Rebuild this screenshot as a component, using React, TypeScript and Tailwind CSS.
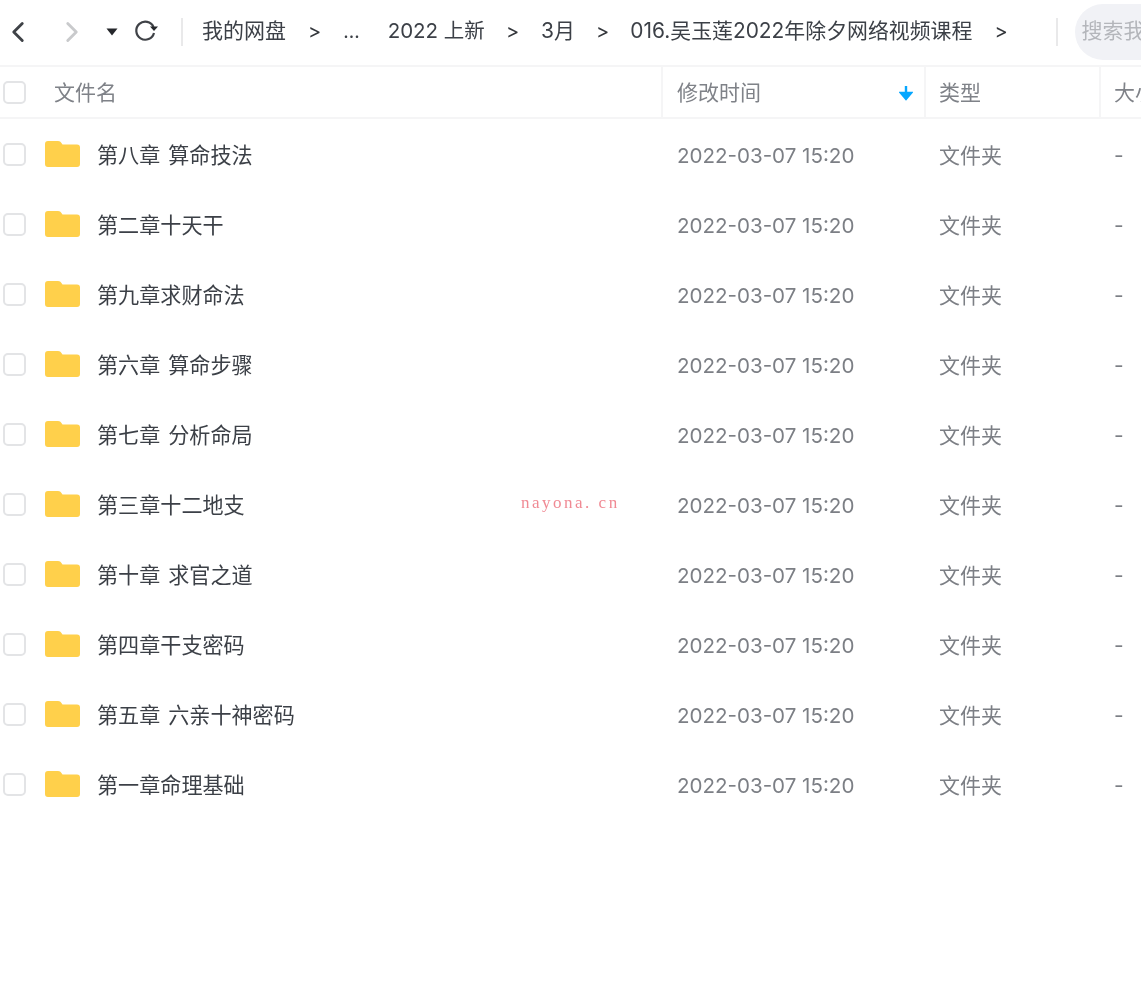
import { ChevronLeft, ChevronRight } from "lucide-react";

const folders = [
  "第八章 算命技法",
  "第二章十天干",
  "第九章求财命法",
  "第六章 算命步骤",
  "第七章 分析命局",
  "第三章十二地支",
  "第十章 求官之道",
  "第四章干支密码",
  "第五章 六亲十神密码",
  "第一章命理基础",
];

function Check() {
  return <div className="w-[23px] h-[23px] rounded-[5px] border-2 border-[#e3e4e6] bg-white shrink-0" />;
}

function Folder() {
  return (
    <svg width="35" height="26" viewBox="0 0 35 26" className="shrink-0">
      <path d="M0 3a3 3 0 0 1 3-3h10c2 0 3 1 4.500 3.500H32a3 3 0 0 1 3 3V23a3 3 0 0 1-3 3H3a3 3 0 0 1-3-3z" fill="#ffd04b" />
    </svg>
  );
}

function Sep() {
  return <span className="text-[#33363b] text-[20px]">&gt;</span>;
}

export default function App() {
  return (
    <div className="relative w-[1141px] h-[1004px] overflow-hidden bg-white blur-[0.4px] font-['Inter','Noto_Sans_CJK_SC',sans-serif]">
      {/* toolbar */}
      <div className="h-[67px] pb-[2px] flex items-center border-b-2 border-[#f5f5f6] text-[21px] text-[#3c4047] whitespace-nowrap">
        <ChevronLeft size={34} strokeWidth={2} className="ml-[1px] text-[#3f4247] shrink-0" />
        <ChevronRight size={34} strokeWidth={2} className="ml-[20px] text-[#c9cacc] shrink-0" />
        <svg width="12" height="8" viewBox="0 0 12 8" className="ml-[17px] shrink-0">
          <path d="M0.500 0.500h11L6 7.500z" fill="#25272b" />
        </svg>
        <svg width="26" height="26" viewBox="0 0 26 26" fill="none" className="ml-[15px] mb-[3px] shrink-0">
          <path d="M20.500 10A9 9 0 1 0 21 16" stroke="#3f4247" strokeWidth="2.200" />
          <path d="M17 9.500h8l-4 4.500z" fill="#25272b" />
        </svg>
        <div className="w-[2px] h-[28px] bg-[#e9e9ea] ml-[22px] mr-[19px] shrink-0" />
        <div className="flex items-center pb-[1px]">
          <span>我的网盘</span>
          <span className="ml-[22px]"><Sep /></span>
          <span className="ml-[22px] text-[19px] pt-[2px]">...</span>
          <span className="ml-[28px] text-[20.500px]">2022 上新</span>
          <span className="ml-[21px]"><Sep /></span>
          <span className="ml-[22px]">3月</span>
          <span className="ml-[21px]"><Sep /></span>
          <span className="ml-[21px] text-[20.900px]">016.吴玉莲2022年除夕网络视频课程</span>
          <span className="ml-[22px]"><Sep /></span>
        </div>
        <div className="w-[2px] h-[28px] bg-[#e9e9ea] ml-[48px] mr-[17px] shrink-0" />
        <div className="h-[56px] w-[120px] shrink-0 rounded-l-[28px] bg-[#f1f2f6] pl-[7px] pb-[2px] flex items-center text-[#b4b6bb] overflow-hidden">
          搜索我的文件
        </div>
      </div>

      {/* table header */}
      <div className="h-[52px] flex border-b-2 border-[#f5f5f6] text-[21px] text-[#7f8288] whitespace-nowrap">
        <div className="w-[661px] shrink-0 flex items-center pl-[3px]">
          <Check />
          <span className="ml-[28px] pt-[2px]">文件名</span>
        </div>
        <div className="w-[263px] shrink-0 flex items-center justify-between border-l-2 border-[#f5f5f6] pl-[14px] pr-[11px]">
          <span className="pt-[2px]">修改时间</span>
          <svg width="14" height="16" viewBox="0 0 14 16" className="mt-[2px]">
            <path d="M7 1v12M2 8l5 6 5-6z" stroke="#06a7ff" strokeWidth="2.400" fill="#06a7ff" />
          </svg>
        </div>
        <div className="w-[175px] shrink-0 flex items-center border-l-2 border-[#f5f5f6] pl-[13px] pt-[2px]">类型</div>
        <div className="flex-1 flex items-center border-l-2 border-[#f5f5f6] pl-[13px] pt-[2px]">大小</div>
      </div>

      {/* rows */}
      <div className="flex flex-col whitespace-nowrap pt-[1px]">
        {folders.map((name) => (
          <div key={name} className="h-[70px] flex items-center text-[21px] text-[#7c7f85]">
            <div className="w-[662px] shrink-0 flex items-center pl-[3px]">
              <Check />
              <div className="ml-[19px] mb-[2px]">
                <Folder />
              </div>
              <span className="ml-[17px] pt-[2px] text-[21.100px] [word-spacing:2px] text-[#3c4047]">{name}</span>
            </div>
            <div className="w-[263px] shrink-0 pl-[15px] pt-[2px] text-[20.550px]">2022-03-07 15:20</div>
            <div className="w-[175px] shrink-0 pl-[14px] pt-[2px]">文件夹</div>
            <div className="pl-[14px] pt-[2px]">-</div>
          </div>
        ))}
      </div>

      {/* watermark */}
      <div className="absolute left-[521px] top-[492px] font-['Liberation_Serif',serif] text-[17px] leading-[22px] tracking-[2.500px] text-[#f08a94]">
        nayona. cn
      </div>
    </div>
  );
}
